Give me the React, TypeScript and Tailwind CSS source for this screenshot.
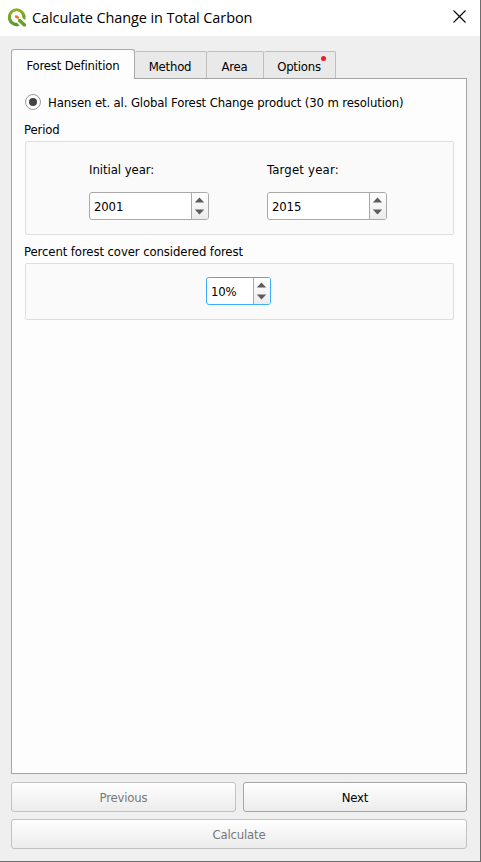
import React from "react";

const uiFont = "font-['DejaVu_Sans_Condensed','DejaVu_Sans','Noto_Sans',sans-serif] [font-stretch:condensed]";

function Arrows() {
  return (
    <svg width="10" height="18" viewBox="0 0 10 18" fill="#5c5c5c">
      <path d="M4.5 0.5 L9.2 5.5 H-0.2 Z" />
      <path d="M4.5 17.5 L9.2 12.5 H-0.2 Z" />
    </svg>
  );
}

function SpinBox({ value, width, focused = false }: { value: string; width: string; focused?: boolean }) {
  return (
    <div className={`flex h-7 overflow-hidden rounded-[3px] border bg-white ${width} ${focused ? "border-[#3daefd]" : "border-[#a9a9a9]"}`}>
      <div className="flex flex-1 items-center pl-1 pt-0.5">{value}</div>
      <div className="flex w-[17px] items-center justify-center border-l border-[#a9a9a9] bg-gradient-to-b from-white to-[#ececec]">
        <Arrows />
      </div>
    </div>
  );
}

function PushButton({ label, disabled = false, className = "" }: { label: string; disabled?: boolean; className?: string }) {
  return (
    <button
      disabled={disabled}
      className={`flex h-[30px] items-center justify-center rounded-[3px] border bg-gradient-to-b from-[#fefefe] to-[#ececec] pt-px tracking-[-0.2px] ${disabled ? "border-[#c2c2c2] text-[#787878]" : "border-[#a5a5a5] text-black"} ${className}`}
    >
      {label}
    </button>
  );
}

function QgisLogo() {
  return (
    <svg width="20" height="20" viewBox="0 0 20 20">
      <defs>
        <linearGradient id="leaf" x1="0" y1="0" x2="0" y2="1">
          <stop offset="0" stopColor="#93b023" />
          <stop offset="1" stopColor="#589632" />
        </linearGradient>
      </defs>
      <path d="M12.6 17.7 A8.9 8.9 0 1 1 18.2 12 L15.2 9.8 A5.7 5.7 0 1 0 10 14.7 Z" fill="url(#leaf)" />
      <path d="M11.4 11 H13.6 L19 16 V18.6 H16.4 L10.8 13.2 Z" fill="#69a12e" />
      <path d="M8 7.4 H10.4 L12.2 9.2 V10.8 H10.6 L8 9.6 Z" fill="#ee7913" />
    </svg>
  );
}

const tab = "flex h-[27px] items-center justify-center border-r border-t border-[#bdbdbd] bg-[#e9e9e9] pt-[3px] pr-px rounded-t-[2px] tracking-[-0.2px]";

export default function App() {
  return (
    <div className={`flex h-[862px] w-[481px] flex-col border-b border-r border-[#6d6d6d] bg-[#efefef] text-[13px] leading-4 tracking-[-0.13px] text-black ${uiFont}`}>
      <header className="flex h-9 shrink-0 items-center bg-white pl-[7px] pr-[14px]">
        <QgisLogo />
        <h1 className="ml-[5px] flex-1 whitespace-nowrap font-['Open_Sans','Noto_Sans',sans-serif] text-[14.5px] tracking-[-0.1px] [font-stretch:normal]">Calculate Change in Total Carbon</h1>
        <svg className="mb-[3px]" width="13" height="13" viewBox="0 0 13 13" stroke="#000" strokeWidth="1.1">
          <path d="M0.5 0.5 L12.5 12.5 M12.5 0.5 L0.5 12.5" />
        </svg>
      </header>

      <nav className="flex h-[42px] shrink-0 items-end whitespace-nowrap pl-[11px]">
        <div className="relative z-10 -mb-px flex h-[30px] w-[124px] items-center justify-center rounded-t-[3px] border border-b-0 border-[#a9a9a9] bg-[#fdfdfd] pt-[3px] tracking-[-0.18px]">Forest Definition</div>
        <div className={`w-[72px] ${tab}`}>Method</div>
        <div className={`w-[57px] ${tab}`}>Area</div>
        <div className={`relative w-[72px] ${tab}`}>
          Options
          <span className="absolute right-[9px] top-[4px] size-[5px] rounded-full bg-[#ec1c24]" />
        </div>
      </nav>

      <main className="ml-[11px] flex h-[696px] w-[456px] shrink-0 flex-col whitespace-nowrap border border-[#a5a5a5] bg-[#fdfdfd] pl-[13px] pr-3 pt-[15px]">
        <label className="flex h-4 items-center">
          <span className="flex size-4 items-center justify-center rounded-full border border-[#9c9c9c] bg-white">
            <span className="size-2 rounded-full bg-[#444]" />
          </span>
          <span className="ml-[7px] pt-px">Hansen et. al. Global Forest Change product (30 m resolution)</span>
        </label>
        <h2 className="-ml-px mt-3 h-[19px]">Period</h2>
        <section className="flex h-[94px] rounded-[2px] border border-[#dedede] bg-[#fafafa] pl-[63px] pt-5">
          <div className="w-[178px]">
            <div className="mb-[14px] tracking-[-0.05px]">Initial year:</div>
            <SpinBox value="2001" width="w-[120px]" />
          </div>
          <div>
            <div className="mb-[14px] tracking-[0.2px]">Target year:</div>
            <SpinBox value="2015" width="w-[120px]" />
          </div>
        </section>
        <h2 className="-ml-px mt-[9px] h-[19px] tracking-[-0.1px]">Percent forest cover considered forest</h2>
        <section className="flex h-[57px] rounded-[2px] border border-[#dedede] bg-[#fafafa] pl-[180px] pt-[13px]">
          <SpinBox value="10%" width="w-[65px]" focused />
        </section>
      </main>

      <footer className="ml-[11px] mt-2 flex w-[456px] flex-col gap-[7px]">
        <div className="flex gap-[7px]">
          <PushButton label="Previous" disabled className="w-[225px]" />
          <PushButton label="Next" className="w-[224px]" />
        </div>
        <PushButton label="Calculate" disabled className="w-full" />
      </footer>
    </div>
  );
}
